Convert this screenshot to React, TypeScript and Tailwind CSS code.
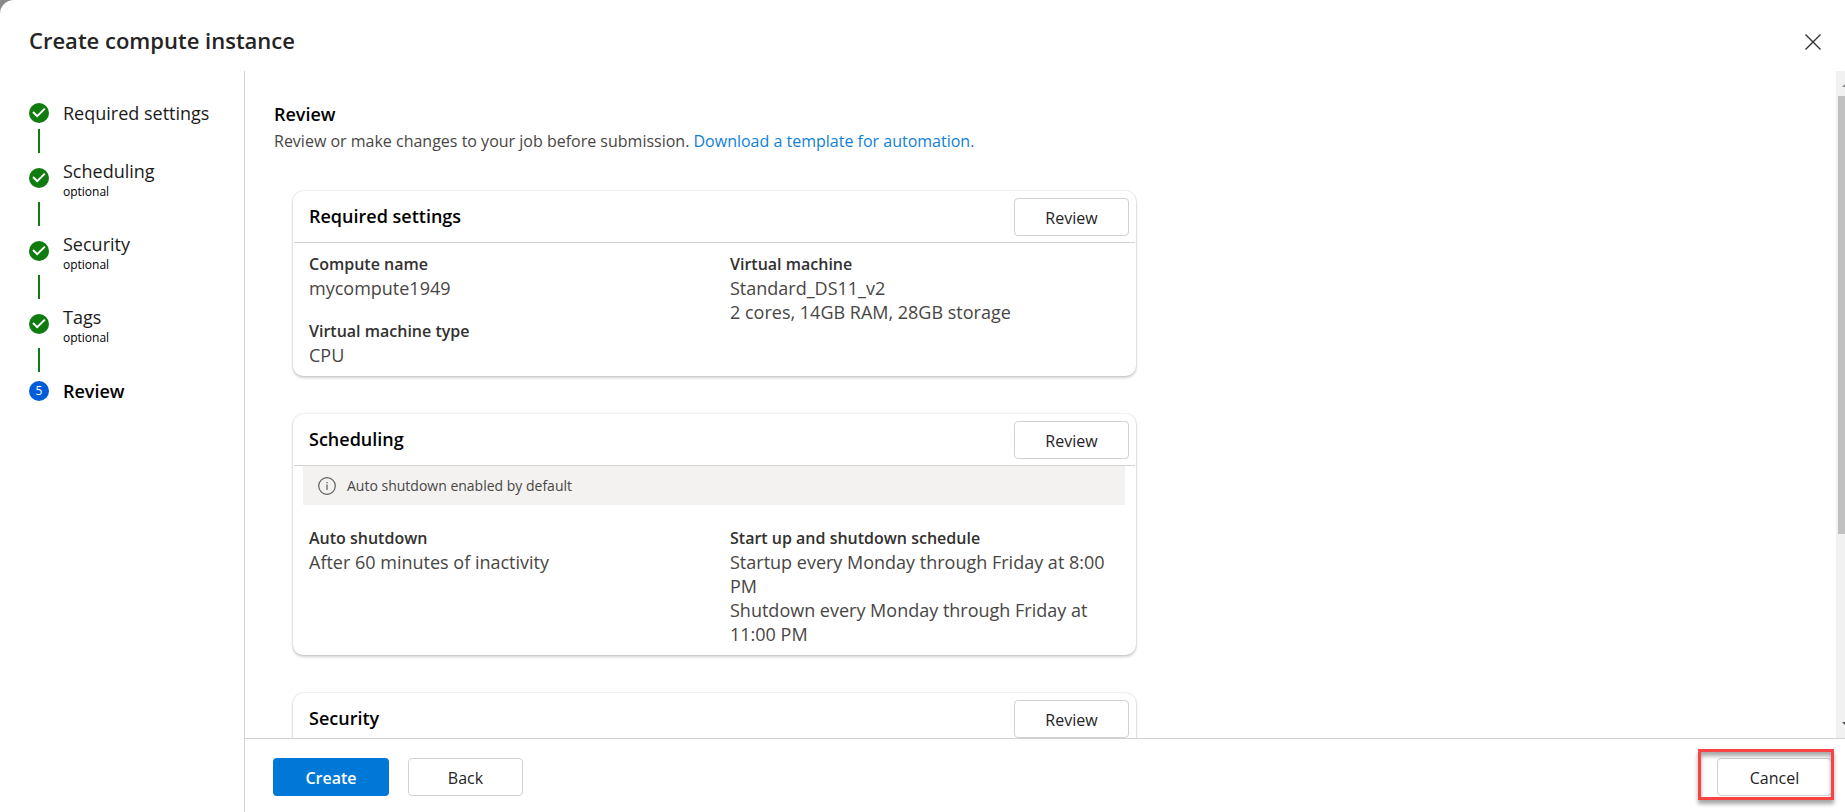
import type { ReactNode } from "react";

type Step = { label: string; optional?: boolean; current?: boolean };

const steps: Step[] = [
  { label: "Required settings" },
  { label: "Scheduling", optional: true },
  { label: "Security", optional: true },
  { label: "Tags", optional: true },
  { label: "Review", current: true },
];

function CheckBadge() {
  return (
    <svg viewBox="0 0 20 20" className="size-5" aria-hidden="true">
      <circle cx="10" cy="10" r="10" fill="#107c10" />
      <path d="M4 9 8.2 13.2 15.8 5.6" fill="none" stroke="#fff" strokeWidth="2" />
    </svg>
  );
}

function StepItem({ step, index, last }: { step: Step; index: number; last: boolean }) {
  return (
    <li>
      <div className="flex items-start gap-[14px]">
        <div className={step.optional ? "shrink-0 pt-2" : "shrink-0 pt-[2px]"}>
          {step.current ? (
            <span className="flex size-5 items-center justify-center rounded-full bg-[#015cda] text-xs text-white">
              {index + 1}
            </span>
          ) : (
            <CheckBadge />
          )}
        </div>
        <div className="flex flex-col text-black">
          <a
            href="#"
            className={
              step.current
                ? "text-[18px] leading-6 font-semibold"
                : step.optional
                  ? "text-[18px] leading-[22px] text-[#1b1a19]"
                  : "text-[18px] leading-6 text-[#1b1a19]"
            }
          >
            {step.label}
          </a>
          {step.optional && <span className="text-xs leading-5">optional</span>}
        </div>
      </div>
      {!last && (
        <div className={step.optional ? "pb-[7px] pl-[9px]" : "pt-1 pb-[7px] pl-[9px]"}>
          <div className="h-6 w-[2px] bg-[#107c10]" />
        </div>
      )}
    </li>
  );
}

function Button({ children, primary }: { children: ReactNode; primary?: boolean }) {
  return (
    <button
      type="button"
      className={
        primary
          ? "h-[38px] w-[116px] rounded-[4px] bg-[#0078d7] pt-[2px] text-base font-semibold text-white"
          : "h-[38px] w-[115px] rounded-[4px] border border-[#d1d1d1] bg-white pt-[2px] text-base font-medium text-[#242424]"
      }
    >
      {children}
    </button>
  );
}

function Card({ title, children }: { title: string; children?: ReactNode }) {
  return (
    <section className="rounded-[10px] bg-white px-px shadow-[0_0_2px_rgba(0,0,0,0.2),0_2px_3px_rgba(0,0,0,0.18)]">
      <div className="flex h-[52px] items-center justify-between border-b border-[#d2d2d2] pr-[6px] pl-[15px]">
        <h3 className="text-[18px] font-semibold text-black">{title}</h3>
        <Button>Review</Button>
      </div>
      {children}
    </section>
  );
}

function Field({ label, values }: { label: string; values: string[] }) {
  return (
    <div>
      <dt className="text-base leading-6 font-semibold text-[#323130]">{label}</dt>
      {values.map((value) => (
        <dd key={value} className="text-[18px] leading-6 text-[#484644]">
          {value}
        </dd>
      ))}
    </div>
  );
}

function ScrollBar() {
  return (
    <div className="flex w-[9px] shrink-0 flex-col overflow-hidden bg-[#f1f1f1] pl-[2px]" aria-hidden="true">
      <svg viewBox="0 0 7 25" className="h-[25px] w-[7px] shrink-0">
        <path d="M4 16 7 13V16Z" fill="#8a8a8a" />
      </svg>
      <div className="flex min-h-0 flex-1 flex-col">
        <div className="h-[71%] bg-[#c1c1c1]" />
      </div>
      <svg viewBox="0 0 7 25" className="h-[25px] w-[7px] shrink-0">
        <path d="M4 9H7V12Z" fill="#505050" />
      </svg>
    </div>
  );
}

export default function App() {
  return (
    <div className="h-screen bg-[#8a8a8a] font-['Open_Sans','Noto_Sans',sans-serif]">
      <div className="flex h-full flex-col overflow-hidden rounded-tl-[14px] bg-white">
        <header className="flex h-[71px] shrink-0 items-center justify-between pt-3 pr-[23px] pl-[29px]">
          <h1 className="pb-1 text-[22px] leading-8 font-semibold text-[#242424]">Create compute instance</h1>
          <button type="button" aria-label="Close" className="flex size-[18px] items-center justify-center">
            <svg viewBox="0 0 16 16" className="size-4" aria-hidden="true">
              <path d="M.5.5 15.5 15.5M15.5.5.5 15.5" stroke="#323130" strokeWidth="1.4" fill="none" />
            </svg>
          </button>
        </header>

        <div className="flex min-h-0 flex-1">
          <nav aria-label="Steps" className="w-[245px] shrink-0 border-r border-[#d2d2d2] pt-[30px] pl-[29px]">
            <ol>
              {steps.map((step, i) => (
                <StepItem key={step.label} step={step} index={i} last={i === steps.length - 1} />
              ))}
            </ol>
          </nav>

          <div className="flex min-w-0 flex-1 flex-col">
            <div className="flex min-h-0 flex-1">
              <main className="min-w-0 flex-1 overflow-hidden pt-[30px] pl-[29px]">
                <h2 className="text-[18px] leading-[26px] font-semibold text-black">Review</h2>
                <p className="text-base leading-7 text-[#484644]">
                  Review or make changes to your job before submission.{" "}
                  <a href="#" className="text-[#0f7fd8]">
                    Download a template for automation.
                  </a>
                </p>

                <div className="mt-9 ml-[19px] flex max-w-[843px] flex-col gap-[38px]">
                  <Card title="Required settings">
                    <dl className="grid grid-cols-2 gap-x-6 pt-[9px] pr-2 pb-[9px] pl-[15px]">
                      <div className="flex flex-col gap-[19px]">
                        <Field label="Compute name" values={["mycompute1949"]} />
                        <Field label="Virtual machine type" values={["CPU"]} />
                      </div>
                      <Field
                        label="Virtual machine"
                        values={["Standard_DS11_v2", "2 cores, 14GB RAM, 28GB storage"]}
                      />
                    </dl>
                  </Card>

                  <Card title="Scheduling">
                    <div className="mr-[10px] ml-[9px] flex h-[39px] items-center gap-[11px] bg-[#f3f2f1] pl-[15px]">
                      <svg viewBox="0 0 18 18" className="size-[18px] shrink-0" aria-hidden="true">
                        <circle cx="9" cy="9" r="8.3" fill="none" stroke="#605e5c" strokeWidth="1.2" />
                        <path d="M9 7.6V13M9 5V6.3" stroke="#605e5c" strokeWidth="1.2" />
                      </svg>
                      <span className="text-sm text-[#484644]">Auto shutdown enabled by default</span>
                    </div>
                    <dl className="grid grid-cols-2 gap-x-6 pt-[21px] pr-2 pb-[9px] pl-[15px]">
                      <Field label="Auto shutdown" values={["After 60 minutes of inactivity"]} />
                      <Field
                        label="Start up and shutdown schedule"
                        values={[
                          "Startup every Monday through Friday at 8:00 PM",
                          "Shutdown every Monday through Friday at 11:00 PM",
                        ]}
                      />
                    </dl>
                  </Card>

                  <Card title="Security">
                    <div className="h-32" />
                  </Card>
                </div>
              </main>
              <ScrollBar />
            </div>

            <footer className="flex h-[74px] shrink-0 items-center justify-between border-t border-[#d2d2d2] pt-[3px] pr-[13px] pl-7">
              <div className="flex gap-[19px]">
                <Button primary>Create</Button>
                <Button>Back</Button>
              </div>
              <div className="relative">
                <Button>Cancel</Button>
                <div className="pointer-events-none absolute -top-[9px] -right-[2px] -bottom-[4px] -left-[19px] border-[3px] border-[#fa4343] shadow-[0_4px_4px_rgba(0,0,0,0.35),inset_0_4px_4px_rgba(0,0,0,0.35)]" />
              </div>
            </footer>
          </div>
        </div>
      </div>
    </div>
  );
}
